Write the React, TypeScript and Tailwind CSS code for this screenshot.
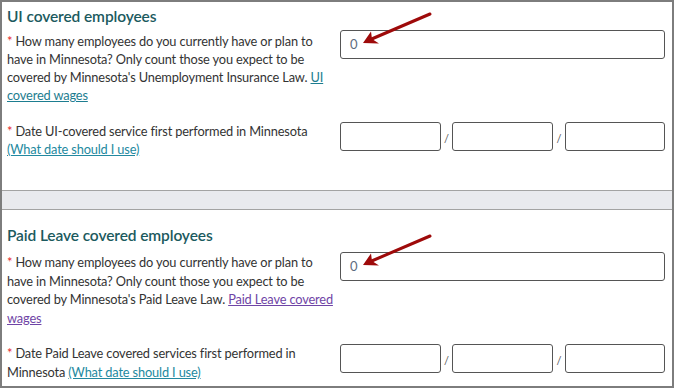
import React from "react";

const font = { fontFamily: 'Lato, "Noto Sans", sans-serif' };

function Arrow() {
  return (
    <svg
      className="absolute pointer-events-none"
      width="80"
      height="40"
      viewBox="0 0 80 40"
      style={{ left: 0, top: 0 }}
    >
      <line x1="70" y1="2" x2="7" y2="29" stroke="#9e0a0a" strokeWidth="3" strokeLinecap="round" />
      <path d="M3 31 L11 19.5 L12 27 L19 31.5 Z" fill="#9e0a0a" />
    </svg>
  );
}

function DateInputs() {
  return (
    <div className="flex items-start">
      <div className="w-[101px] h-[29px] border border-[#555] rounded-[3px] bg-white" />
      <span className="w-[11px] text-center text-[11px] text-[#555] leading-none pt-[11px]">/</span>
      <div className="w-[101px] h-[29px] border border-[#555] rounded-[3px] bg-white" />
      <span className="w-[12px] text-center text-[11px] text-[#555] leading-none pt-[11px]">/</span>
      <div className="w-[100px] h-[29px] border border-[#555] rounded-[3px] bg-white" />
    </div>
  );
}

function NumberInput() {
  return (
    <div className="relative w-[325px] h-[29px] border border-[#555] rounded-[3px] bg-white flex items-center pl-[9px] text-[13px] text-[#5d6c80]">
      0
    </div>
  );
}

const Star = () => <span className="text-[#e4262c]">*</span>;

export default function App() {
  return (
    <div
      className="w-[674px] h-[388px] border-2 border-[#7d7d7d] bg-white text-[#333] overflow-hidden flex flex-col"
      style={font}
    >
      {/* Section 1 */}
      <div className="pl-[5px] pr-[7px] h-[188px]">
        <h2 className="pt-[4px] h-[28px] text-[15.5px] leading-[20px] font-semibold text-[#1b5a5e] tracking-[-0.1px]">
          UI covered employees
        </h2>
        <div className="flex justify-between items-start h-[92px]">
          <p className="w-[330px] pt-[2px] text-[12.8px] tracking-[-0.15px] leading-[18px] whitespace-nowrap">
            <Star /> How many employees do you currently have or plan to
            <br />
            have in Minnesota? Only count those you expect to be
            <br />
            covered by Minnesota's Unemployment Insurance Law.{" "}
            <span className="text-[#1d7d90] underline">UI</span>
            <br />
            <span className="text-[#1d7d90] underline">covered wages</span>
          </p>
          <div className="relative">
            <NumberInput />
            <div className="absolute left-[20px] top-[-18px]">
              <Arrow />
            </div>
          </div>
        </div>
        <div className="flex justify-between items-start">
          <p className="w-[330px] text-[12.8px] tracking-[-0.15px] leading-[18px] whitespace-nowrap">
            <Star /> Date UI-covered service first performed in Minnesota
            <br />
            <span className="text-[#2389a0] underline">(What date should I use)</span>
          </p>
          <DateInputs />
        </div>
      </div>

      {/* Band */}
      <div className="h-[20px] border-y border-[#a3a3a3] bg-[#e9eaee]" />

      {/* Section 2 */}
      <div className="pl-[5px] pr-[7px] flex-1">
        <h2 className="pt-[15px] h-[42px] text-[15.5px] leading-[20px] font-semibold text-[#1b5a5e] tracking-[-0.1px]">
          Paid Leave covered employees
        </h2>
        <div className="flex justify-between items-start h-[92px]">
          <p className="w-[330px] pt-[1px] text-[12.8px] tracking-[-0.15px] leading-[18.5px] whitespace-nowrap">
            <Star /> How many employees do you currently have or plan to
            <br />
            have in Minnesota? Only count those you expect to be
            <br />
            covered by Minnesota's Paid Leave Law.{" "}
            <span className="text-[#6f45a6] underline">Paid Leave covered</span>
            <br />
            <span className="text-[#6f45a6] underline">wages</span>
          </p>
          <div className="relative">
            <NumberInput />
            <div className="absolute left-[20px] top-[-18px]">
              <Arrow />
            </div>
          </div>
        </div>
        <div className="flex justify-between items-start">
          <p className="w-[330px] text-[12.8px] tracking-[-0.15px] leading-[18.5px] whitespace-nowrap">
            <Star /> Date Paid Leave covered services first performed in
            <br />
            Minnesota{" "}
            <span className="text-[#2389a0] underline">(What date should I use)</span>
          </p>
          <DateInputs />
        </div>
      </div>
    </div>
  );
}
